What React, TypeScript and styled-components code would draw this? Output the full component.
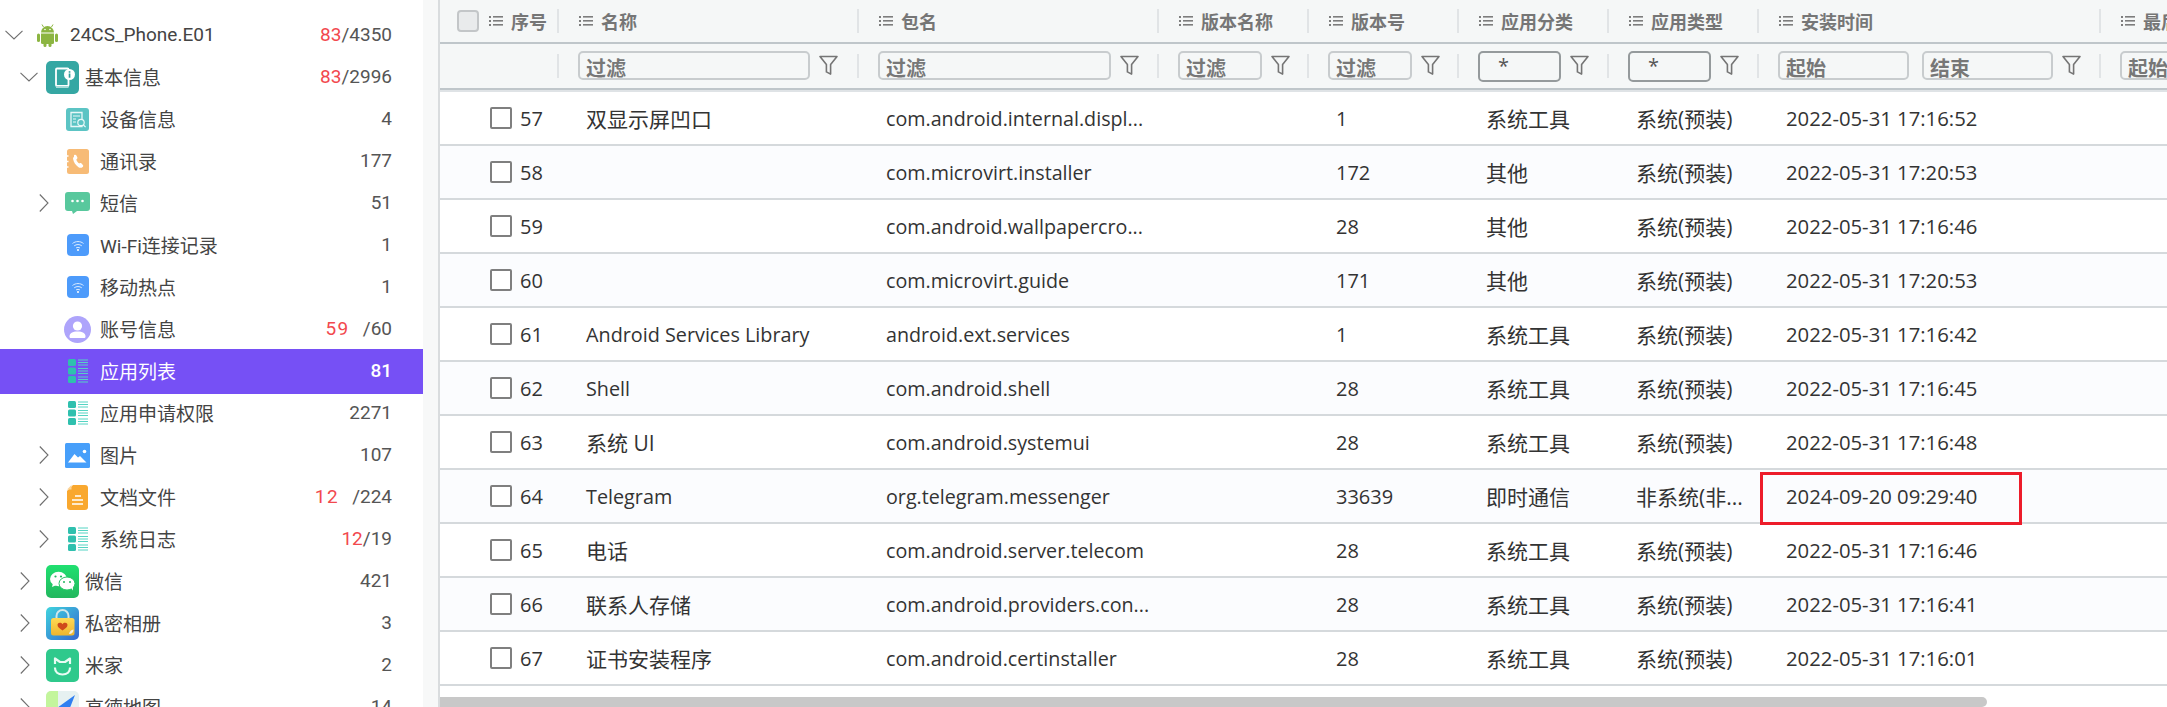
import React from "react";
import styled, { createGlobalStyle } from "styled-components";

const COLUMNS = "119px 300px 300px 150px 150px 150px 150px 342px 342px";

type TreeNode = {
    level: 0 | 1 | 2;
    arrow?: "down" | "right";
    icon: React.ReactNode;
    label: string;
    red?: string;
    redGap?: boolean;
    count: string;
    active?: boolean;
};

const ListGlyph = () => (
    <svg width="14" height="12" viewBox="0 0 14 12">
        <g fill="#7d7d7d">
            <rect x="0" y="1" width="2" height="2" />
            <rect x="0" y="5" width="2" height="2" />
            <rect x="0" y="9" width="2" height="2" />
            <rect x="4" y="1" width="10" height="1.6" />
            <rect x="4" y="5" width="10" height="1.6" />
            <rect x="4" y="9" width="10" height="1.6" />
        </g>
    </svg>
);

const FunnelGlyph = () => (
    <svg width="19" height="21" viewBox="0 0 19 21">
        <path d="M1 1.5h17l-6.4 8v9.6l-4.2-2.2V9.5z" fill="none" stroke="#757575" strokeWidth="1.6" strokeLinejoin="round" />
    </svg>
);

const Chevron = ({ dir }: { dir: "down" | "right" }) =>
    dir === "down" ? (
        <svg width="18" height="10" viewBox="0 0 18 10">
            <path d="M.5.8 9 9 17.5.8" fill="none" stroke="#6f6f6f" strokeWidth="1.1" />
        </svg>
    ) : (
        <svg width="10" height="18" viewBox="0 0 10 18">
            <path d="M.8.5 9 9 .8 17.5" fill="none" stroke="#6f6f6f" strokeWidth="1.1" />
        </svg>
    );

const AndroidIcon = () => (
    <svg width="21" height="23" viewBox="0 0 21 23">
        <g fill="#8cb542">
            <path d="M4 8.500a6.500 6.500 0 0 1 13 0z" />
            <path d="M4 9.500h13v9a1.500 1.500 0 0 1-1.500 1.500h-10A1.500 1.500 0 0 1 4 18.500z" />
            <rect x="0" y="9.500" width="3" height="8.500" rx="1.500" />
            <rect x="18" y="9.500" width="3" height="8.500" rx="1.500" />
            <rect x="6.500" y="18" width="3" height="5" rx="1.500" />
            <rect x="11.500" y="18" width="3" height="5" rx="1.500" />
        </g>
        <path d="m6.500 3-1.500-2.500M14.500 3 16 .5" stroke="#8cb542" strokeWidth="1" />
        <circle cx="8" cy="5.500" r=".8" fill="#fff" />
        <circle cx="13" cy="5.500" r=".8" fill="#fff" />
    </svg>
);

const BasicInfoIcon = () => (
    <svg width="33" height="33" viewBox="0 0 33 33">
        <rect width="33" height="33" rx="5" fill="#35a7a3" />
        <rect x="10" y="7.500" width="12.500" height="17.500" rx="1" fill="none" stroke="#fff" strokeWidth="1.800" />
        <rect x="10" y="25" width="12.500" height="2" fill="#a9dcd9" />
        <circle cx="23.500" cy="13.500" r="5.500" fill="#fff" />
        <rect x="22.700" y="12.500" width="1.700" height="4.200" fill="#2f9c98" />
        <rect x="22.700" y="10.200" width="1.700" height="1.500" fill="#2f9c98" />
    </svg>
);

const DeviceIcon = () => (
    <svg width="23" height="23" viewBox="0 0 23 23">
        <rect width="23" height="23" rx="3" fill="#5cc4c4" />
        <path d="M5 4.500h11v14H5z" fill="none" stroke="#e9f8f8" strokeWidth="1.300" />
        <path d="M7 8h7M7 11h3M7 14h3" stroke="#e9f8f8" strokeWidth="1.200" />
        <circle cx="15" cy="14.500" r="3.200" fill="#5cc4c4" stroke="#e9f8f8" strokeWidth="1.200" />
        <path d="m17.400 17 2.200 2.200" stroke="#e9f8f8" strokeWidth="1.200" />
    </svg>
);

const ContactsIcon = () => (
    <svg width="23" height="25" viewBox="0 0 23 25">
        <rect x="1" width="22" height="25" rx="2.500" fill="#f7bb76" />
        <path d="M0 7h2.500M0 12.500h2.500M0 18h2.500" stroke="#fff" strokeWidth="1.400" />
        <path d="M8 6.200c1-.8 2-.6 2.400.2l1 2.200c.2.600 0 1-.5 1.400l-.6.500c.5 1.600 1.500 3 2.900 4l.7-.4c.5-.3 1-.2 1.400.2l1.600 1.700c.5.600.4 1.300-.2 1.900-1.200 1-2.800 1.200-4.200.3-2.800-1.900-4.800-4.700-5.400-8.200-.2-1 .2-1.800.9-2.300z" fill="#fff" />
    </svg>
);

const SmsIcon = () => (
    <svg width="25" height="22" viewBox="0 0 25 22">
        <path d="M3 0h19a3 3 0 0 1 3 3v13a3 3 0 0 1-3 3H12l-4 3-1-3H3a3 3 0 0 1-3-3V3a3 3 0 0 1 3-3z" fill="#58c89d" />
        <circle cx="7.500" cy="9" r="1.300" fill="#fff" />
        <circle cx="12.500" cy="9" r="1.300" fill="#fff" />
        <circle cx="17.500" cy="9" r="1.300" fill="#fff" />
    </svg>
);

const WifiIcon = () => (
    <svg width="22" height="22" viewBox="0 0 22 22">
        <rect width="22" height="22" rx="4" fill="#4d9bfb" />
        <g fill="none" stroke="#d9eaff" strokeWidth="1">
            <path d="M5.500 9.500c3-2.600 8-2.600 11 0" />
            <path d="M7.200 11.800c2.200-1.700 5.400-1.700 7.600 0" />
            <path d="M9 14c1.200-.8 2.800-.8 4 0" />
        </g>
        <circle cx="11" cy="16" r="1" fill="#fff" />
    </svg>
);

const UserIcon = () => (
    <svg width="27" height="27" viewBox="0 0 27 27">
        <circle cx="13.500" cy="13.500" r="13.500" fill="#aea4fb" />
        <circle cx="13.500" cy="10" r="4.600" fill="#fff" />
        <path d="M5.500 20.500c0-3.400 3-5 8-5s8 1.600 8 5c0 1-.6 1.500-1.500 1.500H7c-.9 0-1.500-.5-1.500-1.500z" fill="#fff" />
    </svg>
);

const TableIcon = () => (
    <svg width="20" height="24" viewBox="0 0 20 24">
        <g fill="#2fc0ae">
            <rect x="0" y="0" width="8" height="7" rx="1.500" />
            <rect x="0" y="8.500" width="8" height="7" rx="1.500" />
            <rect x="0" y="17" width="8" height="7" rx="1.500" />
        </g>
        <g stroke="#55d4c3" strokeWidth="1">
            <path d="M10 1h10M10 3.500h10M10 6h10M10 9.500h10M10 12h10M10 14.500h10M10 18h10M10 20.500h10M10 23h10" />
        </g>
    </svg>
);

const PictureIcon = () => (
    <svg width="25" height="25" viewBox="0 0 25 25">
        <rect width="25" height="25" rx="1.500" fill="#479ffa" />
        <circle cx="19.500" cy="8.500" r="1.800" fill="#fff" />
        <path d="M3 19.500 9.500 11l3.500 3.500 2-1.500 6.500 6.500z" fill="#fff" />
    </svg>
);

const DocIcon = () => (
    <svg width="21" height="25" viewBox="0 0 21 25">
        <path d="M6 0h12a3 3 0 0 1 3 3v19a3 3 0 0 1-3 3H3a3 3 0 0 1-3-3V6z" fill="#f9a82f" />
        <path d="M4.500 0v4.500H0z" fill="#fbd49a" />
        <path d="M8 11h6M5 15h11M5 19h11" stroke="#fff" strokeWidth="1.700" />
    </svg>
);

const WechatIcon = () => (
    <svg width="33" height="33" viewBox="0 0 33 33">
        <defs>
            <linearGradient id="wx" x1="0" y1="0" x2="0" y2="1">
                <stop offset="0" stopColor="#20e070" />
                <stop offset="1" stopColor="#22b75e" />
            </linearGradient>
        </defs>
        <rect width="33" height="33" rx="5" fill="url(#wx)" />
        <ellipse cx="12.500" cy="14" rx="8.500" ry="7.200" fill="#fff" />
        <path d="m7 18-1 4 4.500-2z" fill="#fff" />
        <ellipse cx="21" cy="18.500" rx="8" ry="6.500" fill="#fff" stroke="#24c765" strokeWidth="1" />
        <path d="m25 23 2 2.500-.2-4z" fill="#fff" />
        <circle cx="9.500" cy="11.500" r="1.100" fill="#22b75e" />
        <circle cx="15" cy="11.500" r="1.100" fill="#22b75e" />
        <circle cx="18" cy="17" r="1" fill="#22b75e" />
        <circle cx="24" cy="17" r="1" fill="#22b75e" />
    </svg>
);

const AlbumIcon = () => (
    <svg width="33" height="33" viewBox="0 0 33 33">
        <defs>
            <linearGradient id="alb" x1="0" y1="0" x2="1" y2="1">
                <stop offset="0" stopColor="#3fd4de" />
                <stop offset="1" stopColor="#3566d0" />
            </linearGradient>
            <linearGradient id="albLock" x1="0" y1="0" x2="0" y2="1">
                <stop offset="0" stopColor="#ffd955" />
                <stop offset="1" stopColor="#eeb52e" />
            </linearGradient>
        </defs>
        <rect width="33" height="33" rx="5" fill="url(#alb)" />
        <path d="M10.500 12V9a6 6 0 0 1 12 0v3" fill="none" stroke="#cfe6ea" strokeWidth="2" />
        <rect x="5" y="11" width="23.500" height="17.500" rx="2.500" fill="url(#albLock)" />
        <path d="M16.500 23.500c-3-2-5-3.500-5-5.500 0-2.500 3.500-3 5-.8 1.500-2.200 5-1.700 5 .8 0 2-2 3.500-5 5.500z" fill="#cf4a1b" />
        <path d="M23 27c.5-2.500 2-4 4.500-4.500 0 2.500-1.500 4.500-4.500 4.500z" fill="#f5f0e0" />
    </svg>
);

const MiHomeIcon = () => (
    <svg width="33" height="33" viewBox="0 0 33 33">
        <rect width="33" height="33" rx="5" fill="#2fc98c" />
        <path d="M9 9.500v9.500c0 4 3 6.500 7.500 6.500S24 23 24 19V9.500l-5 3.500h-5z" fill="none" stroke="#e8fbf3" strokeWidth="2.200" strokeLinejoin="round" />
        <rect x="6" y="15" width="5" height="3.500" fill="#2fc98c" />
        <rect x="22" y="15" width="5" height="3.500" fill="#2fc98c" />
    </svg>
);

const AmapIcon = () => (
    <svg width="33" height="33" viewBox="0 0 33 33">
        <rect width="33" height="33" rx="5" fill="#e6f1f1" />
        <path d="M0 5a5 5 0 0 1 5-5h7v33H5a5 5 0 0 1-5-5z" fill="#c3f59c" />
        <path d="M29 4 4 22l10 1 4 9z" fill="#2f7ff0" />
    </svg>
);

const tree: TreeNode[] = [
    { level: 0, arrow: "down", icon: <AndroidIcon />, label: "24CS_Phone.E01", red: "83", count: "/4350" },
    { level: 1, arrow: "down", icon: <BasicInfoIcon />, label: "基本信息", red: "83", count: "/2996" },
    { level: 2, icon: <DeviceIcon />, label: "设备信息", count: "4" },
    { level: 2, icon: <ContactsIcon />, label: "通讯录", count: "177" },
    { level: 2, arrow: "right", icon: <SmsIcon />, label: "短信", count: "51" },
    { level: 2, icon: <WifiIcon />, label: "Wi-Fi连接记录", count: "1" },
    { level: 2, icon: <WifiIcon />, label: "移动热点", count: "1" },
    { level: 2, icon: <UserIcon />, label: "账号信息", red: "59", redGap: true, count: "/60" },
    { level: 2, icon: <TableIcon />, label: "应用列表", count: "81", active: true },
    { level: 2, icon: <TableIcon />, label: "应用申请权限", count: "2271" },
    { level: 2, arrow: "right", icon: <PictureIcon />, label: "图片", count: "107" },
    { level: 2, arrow: "right", icon: <DocIcon />, label: "文档文件", red: "12", redGap: true, count: "/224" },
    { level: 2, arrow: "right", icon: <TableIcon />, label: "系统日志", red: "12", count: "/19" },
    { level: 1, arrow: "right", icon: <WechatIcon />, label: "微信", count: "421" },
    { level: 1, arrow: "right", icon: <AlbumIcon />, label: "私密相册", count: "3" },
    { level: 1, arrow: "right", icon: <MiHomeIcon />, label: "米家", count: "2" },
    { level: 1, arrow: "right", icon: <AmapIcon />, label: "高德地图", count: "14" },
];

const levels = {
    0: { pad: 5, slot: 32, icon: 21, after: 12 },
    1: { pad: 20, slot: 26, icon: 33, after: 6 },
    2: { pad: 39, slot: 27, icon: 23, after: 11 },
};

const headers = ["名称", "包名", "版本名称", "版本号", "应用分类", "应用类型", "安装时间", "最后更新时间"];

const apps = [
    { no: 57, name: "双显示屏凹口", pkg: "com.android.internal.displ...", ver: "1", cat: "系统工具", type: "系统(预装)", time: "2022-05-31 17:16:52" },
    { no: 58, name: "", pkg: "com.microvirt.installer", ver: "172", cat: "其他", type: "系统(预装)", time: "2022-05-31 17:20:53" },
    { no: 59, name: "", pkg: "com.android.wallpapercro...", ver: "28", cat: "其他", type: "系统(预装)", time: "2022-05-31 17:16:46" },
    { no: 60, name: "", pkg: "com.microvirt.guide", ver: "171", cat: "其他", type: "系统(预装)", time: "2022-05-31 17:20:53" },
    { no: 61, name: "Android Services Library", pkg: "android.ext.services", ver: "1", cat: "系统工具", type: "系统(预装)", time: "2022-05-31 17:16:42" },
    { no: 62, name: "Shell", pkg: "com.android.shell", ver: "28", cat: "系统工具", type: "系统(预装)", time: "2022-05-31 17:16:45" },
    { no: 63, name: "系统 UI", pkg: "com.android.systemui", ver: "28", cat: "系统工具", type: "系统(预装)", time: "2022-05-31 17:16:48" },
    { no: 64, name: "Telegram", pkg: "org.telegram.messenger", ver: "33639", cat: "即时通信", type: "非系统(非...", time: "2024-09-20 09:29:40", marked: true },
    { no: 65, name: "电话", pkg: "com.android.server.telecom", ver: "28", cat: "系统工具", type: "系统(预装)", time: "2022-05-31 17:16:46" },
    { no: 66, name: "联系人存储", pkg: "com.android.providers.con...", ver: "28", cat: "系统工具", type: "系统(预装)", time: "2022-05-31 17:16:41" },
    { no: 67, name: "证书安装程序", pkg: "com.android.certinstaller", ver: "28", cat: "系统工具", type: "系统(预装)", time: "2022-05-31 17:16:01" },
];

const hasCjk = (text: string) => /[\u4e00-\u9fff]/.test(text);

const App = () => {
    return (
        <Wrapper>
            <GlobalStyle />
            <Sidebar>
                {tree.map((node) => {
                    const lv = levels[node.level];
                    return (
                        <TreeRow key={node.label} $pad={lv.pad} $active={node.active}>
                            <ArrowSlot $width={lv.slot}>{node.arrow && <Chevron dir={node.arrow} />}</ArrowSlot>
                            <IconSlot $width={lv.icon} $after={lv.after}>{node.icon}</IconSlot>
                            <TreeLabel>{node.label}</TreeLabel>
                            <TreeCount $active={node.active}>
                                {node.red && <RedCount $gap={node.redGap}>{node.red}</RedCount>}
                                {node.count}
                            </TreeCount>
                        </TreeRow>
                    );
                })}
            </Sidebar>
            <Gutter />
            <Main>
                <HeaderRow>
                    <HeaderCell $first>
                        <HeadCheck />
                        <ListGlyph />
                        <HeadText>序号</HeadText>
                        <Divider />
                    </HeaderCell>
                    {headers.map((h) => (
                        <HeaderCell key={h}>
                            <ListGlyph />
                            <HeadText>{h}</HeadText>
                            <Divider />
                        </HeaderCell>
                    ))}
                </HeaderRow>
                <FilterRow>
                    <FilterCell><Divider /></FilterCell>
                    <FilterCell><FilterInput placeholder="过滤" $width={232} /><FunnelGlyph /><Divider /></FilterCell>
                    <FilterCell><FilterInput placeholder="过滤" $width={233} /><FunnelGlyph /><Divider /></FilterCell>
                    <FilterCell><FilterInput placeholder="过滤" $width={84} /><FunnelGlyph /><Divider /></FilterCell>
                    <FilterCell><FilterInput placeholder="过滤" $width={84} /><FunnelGlyph /><Divider /></FilterCell>
                    <FilterCell><SelectBox>*</SelectBox><FunnelGlyph /><Divider /></FilterCell>
                    <FilterCell><SelectBox>*</SelectBox><FunnelGlyph /><Divider /></FilterCell>
                    <FilterCell>
                        <FilterInput placeholder="起始" $width={131} />
                        <FilterInput placeholder="结束" $width={131} />
                        <FunnelGlyph />
                        <Divider />
                    </FilterCell>
                    <FilterCell>
                        <FilterInput placeholder="起始" $width={131} />
                    </FilterCell>
                </FilterRow>
                <Body>
                    {apps.map((app, i) => (
                        <DataRow key={app.no} $odd={i % 2 === 1}>
                            <IndexCell><RowCheck />{app.no}</IndexCell>
                            <Cell $size={hasCjk(app.name) ? 21 : 19.8}>{app.name}</Cell>
                            <Cell $size={19.7}>{app.pkg}</Cell>
                            <Cell />
                            <Cell>{app.ver}</Cell>
                            <Cell $size={21}>{app.cat}</Cell>
                            <Cell $size={21}>{app.type}</Cell>
                            <Cell $size={20.3}>
                                {app.time}
                                {app.marked && <RedMark />}
                            </Cell>
                        </DataRow>
                    ))}
                </Body>
                <ScrollTrack>
                    <ScrollThumb />
                </ScrollTrack>
            </Main>
        </Wrapper>
    );
};

export default App;

const GlobalStyle = createGlobalStyle`
    html, body {
        margin: 0;
        padding: 0;
        height: 707px;
        overflow: hidden;
        background: #fff;
    }
    * {
        box-sizing: border-box;
    }
`;

const Wrapper = styled.div`
    display: flex;
    width: 2167px;
    height: 707px;
    overflow: hidden;
`;

const Sidebar = styled.div`
    flex: 0 0 423px;
    height: 707px;
    padding-top: 14px;
    overflow: hidden;
    background: #fff;
    font-family: Roboto, "Noto Sans CJK SC", sans-serif;
    font-size: 19px;
    color: #444;
`;

const Gutter = styled.div`
    flex: 0 0 17px;
    background: #f7f8f8;
    border-right: 2px solid #d9dcde;
`;

const TreeRow = styled.div<{ $pad: number; $active?: boolean }>`
    display: flex;
    align-items: center;
    height: ${(p) => (p.$active ? 45 : 42)}px;
    margin: ${(p) => (p.$active ? "-1.5px 0" : "0")};
    padding: 0 31px 0 ${(p) => p.$pad}px;
    background: ${(p) => (p.$active ? "#7650f5" : "transparent")};
    color: ${(p) => (p.$active ? "#fff" : "inherit")};
`;

const ArrowSlot = styled.div<{ $width: number }>`
    display: flex;
    align-items: center;
    flex: 0 0 ${(p) => p.$width}px;
`;

const IconSlot = styled.div<{ $width: number; $after: number }>`
    display: flex;
    align-items: center;
    justify-content: center;
    flex: 0 0 ${(p) => p.$width}px;
    min-width: 0;
    margin-right: ${(p) => p.$after}px;

    & > svg {
        flex-shrink: 0;
    }
`;

const TreeLabel = styled.span`
    flex: 1;
    padding-bottom: 2px;
    white-space: nowrap;
`;

const TreeCount = styled.span<{ $active?: boolean }>`
    padding-bottom: 2px;
    font-weight: ${(p) => (p.$active ? 500 : 400)};
    color: ${(p) => (p.$active ? "#fff" : "#555")};
`;

const RedCount = styled.span<{ $gap?: boolean }>`
    color: #f2484e;
    letter-spacing: ${(p) => (p.$gap ? "1.5px" : "0")};
    margin-right: ${(p) => (p.$gap ? 13 : 0)}px;
`;

const Main = styled.div`
    flex: 1;
    min-width: 0;
    display: flex;
    flex-direction: column;
    overflow: hidden;
    background: #fff;
    font-family: "Open Sans", "Noto Sans CJK SC", sans-serif;
`;

const HeaderRow = styled.div`
    display: grid;
    grid-template-columns: ${COLUMNS};
    flex: 0 0 44px;
    background: #f5f7f7;
    border-bottom: 2px solid #bfc6ca;
`;

const HeaderCell = styled.div<{ $first?: boolean }>`
    display: flex;
    align-items: center;
    gap: 8px;
    padding-left: ${(p) => (p.$first ? 17 : 20)}px;
    overflow: hidden;
`;

const Divider = styled.span`
    margin-left: auto;
    flex: 0 0 2px;
    height: 24px;
    background: #e1e4e6;
`;

const HeadCheck = styled.span`
    flex: 0 0 22px;
    height: 22px;
    margin-right: 2px;
    border: 2px solid #c3c6c8;
    border-radius: 4px;
    background: #e9ebec;
`;

const HeadText = styled.span`
    font-family: "Noto Sans CJK SC", sans-serif;
    font-size: 18px;
    font-weight: 700;
    color: #767676;
    white-space: nowrap;
`;

const FilterRow = styled.div`
    display: grid;
    grid-template-columns: ${COLUMNS};
    flex: 0 0 46px;
    background: #f5f7f7;
    border-bottom: 2px solid #bfc6ca;
`;

const FilterCell = styled.div`
    display: flex;
    align-items: center;
    gap: 9px;
    padding-left: 19px;
    padding-bottom: 1px;

    & > input + input {
        margin-left: 4px;
    }
`;

const FilterInput = styled.input<{ $width: number }>`
    flex: 0 0 ${(p) => p.$width}px;
    width: ${(p) => p.$width}px;
    height: 29px;
    padding: 3px 6px 0;
    border: 2px solid #c8ccce;
    border-radius: 5px;
    outline: none;
    background: #f5f7f7;
    font-family: "Noto Sans CJK SC", sans-serif;
    font-size: 20px;
    font-weight: 700;
    line-height: 24px;

    &::placeholder {
        color: #777;
        opacity: 1;
    }
`;

const SelectBox = styled.div`
    flex: 0 0 83px;
    height: 31px;
    margin-top: 2px;
    padding-left: 18px;
    border: 2px solid #959a9c;
    border-radius: 5px;
    background: #f5f7f7;
    font-size: 20px;
    line-height: 26px;
    color: #555;
`;

const Body = styled.div`
    flex: 1;
    border-top: 2px solid #dfe3e6;
    overflow: hidden;
`;

const DataRow = styled.div<{ $odd: boolean }>`
    display: grid;
    grid-template-columns: ${COLUMNS};
    height: 54px;
    border-bottom: 2px solid #d5d9dc;
    background: ${(p) => (p.$odd ? "#fbfcfe" : "#fff")};
    font-size: 20px;
    color: #333;
`;

const Cell = styled.div<{ $size?: number }>`
    position: relative;
    display: flex;
    align-items: center;
    padding-left: 27px;
    font-size: ${(p) => p.$size ?? 20}px;
    white-space: nowrap;
`;

const IndexCell = styled.div`
    display: flex;
    align-items: center;
    gap: 8px;
    padding-left: 50px;
`;

const RowCheck = styled.span`
    flex: 0 0 22px;
    height: 22px;
    border: 2px solid #7f7f7f;
    border-radius: 2px;
    background: #fff;
`;

const RedMark = styled.span`
    position: absolute;
    left: 1px;
    top: 2px;
    width: 262px;
    height: 53px;
    border: 3px solid #ed1c2a;
    pointer-events: none;
`;

const ScrollTrack = styled.div`
    flex: 0 0 10px;
    background: #fff;
`;

const ScrollThumb = styled.div`
    width: 1547px;
    height: 10px;
    background: #c8c8c8;
    border-radius: 0 6px 6px 0;
`;
